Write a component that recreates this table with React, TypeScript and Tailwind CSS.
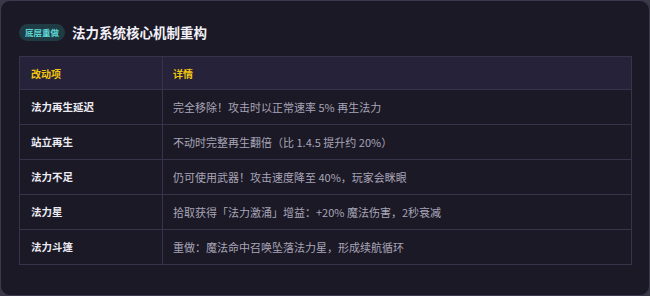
const rows = [
  { name: '法力再生延迟', detail: '完全移除！攻击时以正常速率 5% 再生法力' },
  { name: '站立再生', detail: '不动时完整再生翻倍（比 1.4.5 提升约 20%）' },
  { name: '法力不足', detail: '仍可使用武器！攻击速度降至 40%，玩家会眯眼' },
  { name: '法力星', detail: '拾取获得「法力激涌」增益：+20% 魔法伤害，2秒衰减' },
  { name: '法力斗篷', detail: '重做：魔法命中召唤坠落法力星，形成续航循环' },
];

export default function App() {
  return (
    <div
      className="w-[650px] h-[296px] bg-[#3a3947]"
      style={{ fontFamily: '"Noto Sans CJK SC", "Noto Sans", sans-serif' }}
    >
      <div className="h-full rounded-[10px] border border-[#3b3850] bg-[#1b1925] px-[18px] pt-[23px]">
        <div className="flex items-center gap-[7px] h-[17px]">
          <span className="inline-flex h-[17px] items-center rounded-full bg-[#1f3c45] px-[6px] text-[8.5px] font-bold text-[#5ed6d6]">
            底层重做
          </span>
          <h2 className="text-[13.5px] font-bold text-[#f2f0f8] leading-none">法力系统核心机制重构</h2>
        </div>
        <table className="mt-[15px] w-[613px] border-collapse text-left">
          <thead>
            <tr className="bg-[#25223a]">
              <th className="h-[33px] w-[143px] border border-[#36334a] px-[11px] text-[10px] font-bold text-[#f2c511]">
                改动项
              </th>
              <th className="h-[33px] border border-[#36334a] px-[10px] text-[10px] font-bold text-[#f2c511]">
                详情
              </th>
            </tr>
          </thead>
          <tbody>
            {rows.map((row) => (
              <tr key={row.name}>
                <td className="h-[35px] border border-[#36334a] px-[11px] text-[10.5px] font-bold text-[#ecebf3]">
                  {row.name}
                </td>
                <td className="h-[35px] border border-[#36334a] px-[10px] text-[11px] text-[#a8a5b8]">
                  {row.detail}
                </td>
              </tr>
            ))}
          </tbody>
        </table>
      </div>
    </div>
  );
}
